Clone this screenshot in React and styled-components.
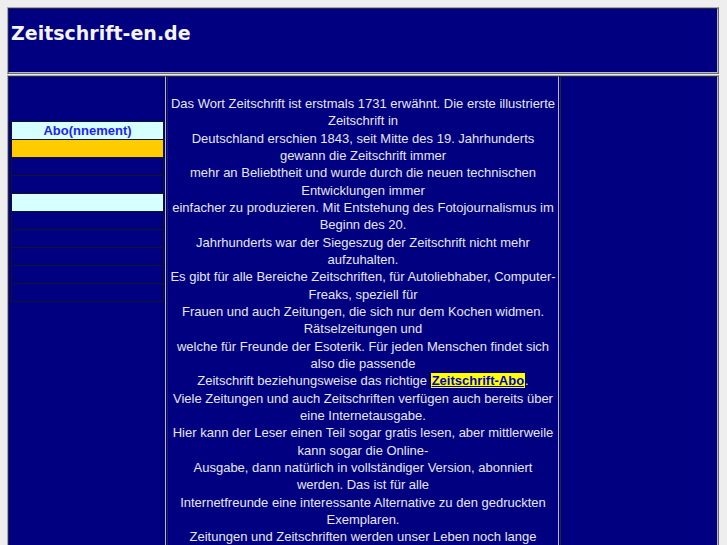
import styled, { createGlobalStyle } from "styled-components";

const GlobalStyle = createGlobalStyle`
  html, body {
    margin: 0;
    padding: 0;
    background: #eeeeee;
  }
  body {
    font-family: "Liberation Sans", Arial, sans-serif;
  }
`;

const Page = styled.div`
  padding: 7px 8px 0 7px;
  display: flex;
  flex-direction: column;
  gap: 1px;
  width: 712px;
`;

const Frame = styled.div`
  border: 1px solid;
  border-color: #a8a8a8 #6a6a6a #6a6a6a #a8a8a8;
  background: #000080;
  display: flex;
  gap: 1px;
`;

const Cell = styled.div`
  border: 1px solid;
  border-color: #24244a #b8b8c0 #b8b8c0 #24244a;
  background: #000080;
  box-sizing: border-box;
  width: ${(p) => p.$w}px;
`;

const HeaderCell = styled(Cell)`
  height: 65px;
  padding: 13px 0 0 2px;
`;

const Logo = styled.h1`
  margin: 0;
  font-family: "DejaVu Sans", Verdana, sans-serif;
  font-weight: bold;
  font-size: 19px;
  color: #f4f4f4;
`;

const NavCell = styled(Cell)`
  padding: 44px 1px 0 2px;
  min-height: 1000px;
`;

const Nav = styled.div`
  display: flex;
  flex-direction: column;
`;

const NavItem = styled.div`
  height: 17px;
  border: 1px solid #12122a;
  border-top: ${(p) => (p.$first ? "1px solid #12122a" : "none")};
  background: ${(p) => p.$bg || "#000080"};
  color: #2222ee;
  font-weight: bold;
  font-size: 13px;
  line-height: 17px;
  text-align: center;
`;

const ContentCell = styled(Cell)`
  padding: 18px 2px 0 2px;
  text-align: center;
  color: #e6e6ee;
  font-size: 13px;
  line-height: 17.33px;
  white-space: nowrap;
`;

const AboLink = styled.a`
  background: #ffff00;
  color: #0000cc;
  font-weight: bold;
  text-decoration: underline;
  padding: 0 1px;
`;

const SideCell = styled(Cell)``;

const navRows = [
  { label: "Abo(nnement)", bg: "#d6ffff" },
  { bg: "#ffcc00" },
  {},
  {},
  { bg: "#d6ffff" },
  {},
  {},
  {},
  {},
  {},
];

export default function App() {
  return (
    <>
      <GlobalStyle />
      <Page>
        <Frame>
          <HeaderCell $w={710}>
            <Logo>Zeitschrift-en.de</Logo>
          </HeaderCell>
        </Frame>
        <Frame>
          <NavCell $w={158}>
            <Nav>
              {navRows.map((r, i) => (
                <NavItem key={i} $first={i === 0} $bg={r.bg}>
                  {r.label}
                </NavItem>
              ))}
            </Nav>
          </NavCell>
          <ContentCell $w={392}>
            Das Wort Zeitschrift ist erstmals 1731 erwähnt. Die erste illustrierte
            <br />
            Zeitschrift in
            <br />
            Deutschland erschien 1843, seit Mitte des 19. Jahrhunderts
            <br />
            gewann die Zeitschrift immer
            <br />
            mehr an Beliebtheit und wurde durch die neuen technischen
            <br />
            Entwicklungen immer
            <br />
            einfacher zu produzieren. Mit Entstehung des Fotojournalismus im
            <br />
            Beginn des 20.
            <br />
            Jahrhunderts war der Siegeszug der Zeitschrift nicht mehr
            <br />
            aufzuhalten.
            <br />
            Es gibt für alle Bereiche Zeitschriften, für Autoliebhaber, Computer-
            <br />
            Freaks, speziell für
            <br />
            Frauen und auch Zeitungen, die sich nur dem Kochen widmen.
            <br />
            Rätselzeitungen und
            <br />
            welche für Freunde der Esoterik. Für jeden Menschen findet sich
            <br />
            also die passende
            <br />
            Zeitschrift beziehungsweise das richtige{" "}
            <AboLink href="#">Zeitschrift-Abo</AboLink>.
            <br />
            Viele Zeitungen und auch Zeitschriften verfügen auch bereits über
            <br />
            eine Internetausgabe.
            <br />
            Hier kann der Leser einen Teil sogar gratis lesen, aber mittlerweile
            <br />
            kann sogar die Online-
            <br />
            Ausgabe, dann natürlich in vollständiger Version, abonniert
            <br />
            werden. Das ist für alle
            <br />
            Internetfreunde eine interessante Alternative zu den gedruckten
            <br />
            Exemplaren.
            <br />
            Zeitungen und Zeitschriften werden unser Leben noch lange
            <br />
            begleiten.
          </ContentCell>
          <SideCell $w={158} />
        </Frame>
      </Page>
    </>
  );
}
